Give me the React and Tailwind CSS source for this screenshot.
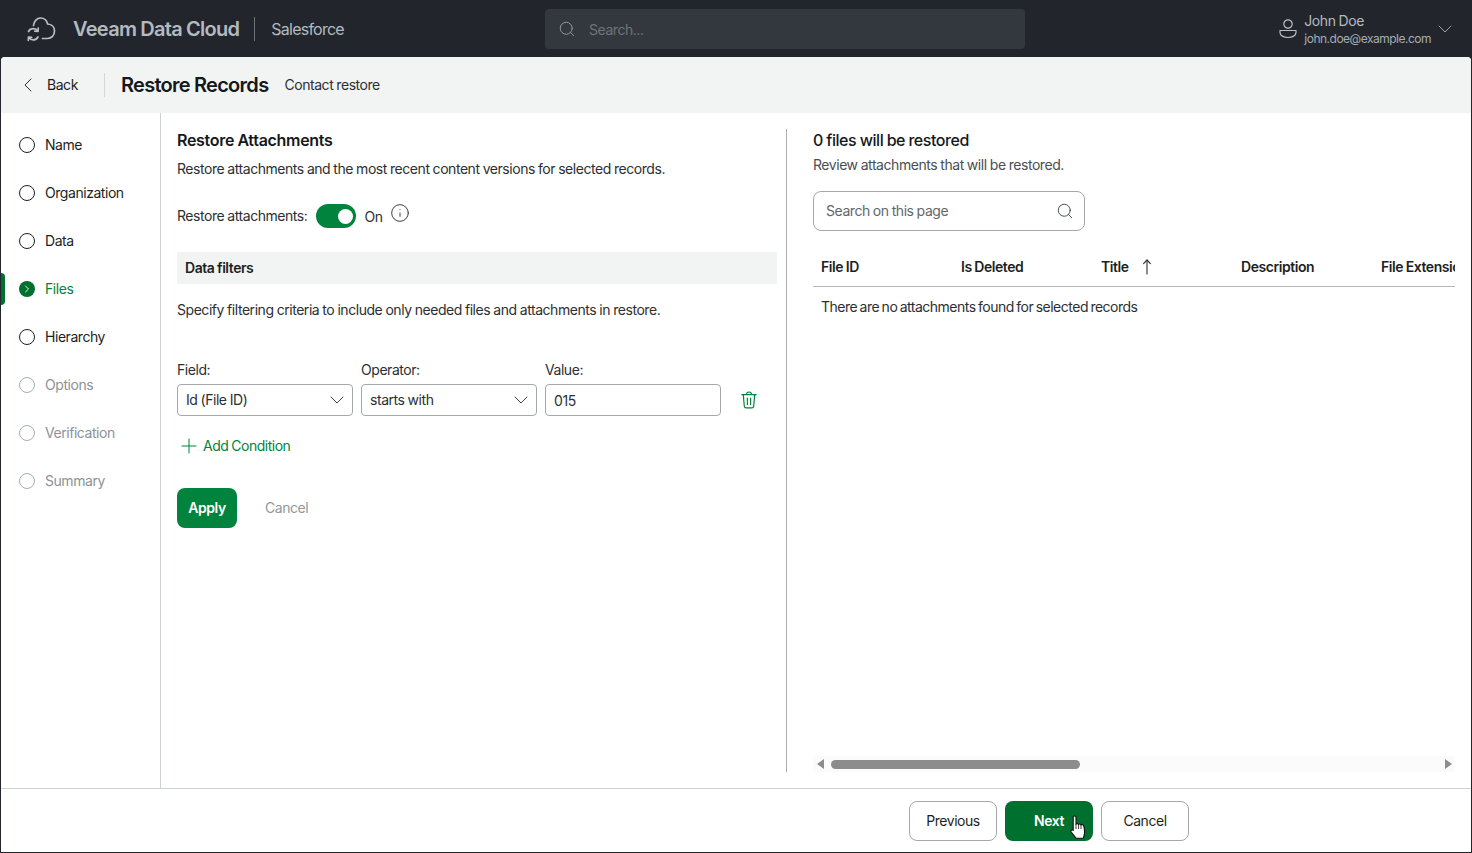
import React from "react";
import { ChevronLeft, ChevronDown, ChevronRight, Search, Plus, Info } from "lucide-react";

function Logo() {
  return (
    <svg width="30" height="26" viewBox="0 0 30 26" fill="none" stroke="#b9bec4" strokeWidth="1.7" strokeLinecap="round" strokeLinejoin="round">
      <path d="M7.5 9.5 C8 5 11 2 14.5 2 C18 2 20.8 4.4 21.6 8 C25.8 8.2 28.5 11 28.5 15 C28.5 19.4 25.6 22.5 21.5 22.5 L16.5 22.5" />
      <path d="M2.5 15.5 C3.5 13.6 5.3 12.7 7.3 12.7 C9.2 12.7 10.8 13.5 11.8 14.9" />
      <path d="M12.2 12 L12 15.4 L8.8 15.2" />
      <path d="M12 21 C11 22.9 9.2 23.9 7.2 23.9 C5.3 23.9 3.7 23 2.7 21.6" />
      <path d="M2.3 24.4 L2.5 21.1 L5.7 21.3" />
    </svg>
  );
}

function User() {
  return (
    <svg width="18" height="20" viewBox="0 0 18 20" fill="none" stroke="#b9bec4" strokeWidth="1.2">
      <circle cx="9" cy="5" r="4.2" />
      <path d="M1 11.5 H17 V13.5 C17 16.5 13.5 18.5 9 18.5 C4.5 18.5 1 16.5 1 13.5 Z" strokeLinejoin="round" />
    </svg>
  );
}

function Trash() {
  return (
    <svg width="16" height="18" viewBox="0 0 16 18" fill="none" stroke="#00843d" strokeWidth="1.2" strokeLinecap="round" strokeLinejoin="round">
      <path d="M0.8 3.6 H15.2" />
      <path d="M5.6 3.4 C5.6 1.8 6.4 1 8 1 C9.6 1 10.4 1.8 10.4 3.4" />
      <path d="M2.3 3.8 L3.3 15.2 C3.4 16.3 4 16.9 5.1 16.9 H10.9 C12 16.9 12.6 16.3 12.7 15.2 L13.7 3.8" />
      <path d="M6.4 7 V13.6" />
      <path d="M9.6 7 V13.6" />
    </svg>
  );
}

function Hand() {
  return (
    <svg width="16" height="24" viewBox="0 0 16 24" fill="#fff" stroke="#111" strokeWidth="1.1" strokeLinejoin="round">
      <path d="M3.2 14.5 V2.2 C3.2 0.6 6 0.6 6 2.2 V9.5 C6.2 8.3 8.4 8.3 8.6 9.6 C8.8 8.6 10.8 8.7 11 10.1 C11.3 9.2 13.5 9.4 13.7 11 C14.6 14 14.8 17.3 14.2 20 L13.4 23.2 H6 L1.2 17.2 C0.2 15.8 1.6 14 3.2 15.4 Z" />
      <path d="M6 9.5 V14 M8.6 9.6 V14 M11 10.1 V14" fill="none" strokeWidth="0.8" />
    </svg>
  );
}

function SortUp() {
  return (
    <svg width="10" height="16" viewBox="0 0 10 16" fill="none" stroke="#2b2f33" strokeWidth="1.1" strokeLinecap="round" strokeLinejoin="round">
      <path d="M5 1 V15" />
      <path d="M1.6 4.6 L5 1 L8.4 4.6" />
    </svg>
  );
}

function Step({ label, state }) {
  if (state === "active") {
    return (
      <div className="relative flex h-12 items-center gap-[10px] pl-[18px]">
        <div className="absolute left-0 top-2 h-8 w-1 rounded-r-sm bg-[#00702f]" />
        <span className="flex size-4 items-center justify-center rounded-full bg-[#00702f]">
          <ChevronRight size={12} color="#fff" strokeWidth={1.8} />
        </span>
        <span className="text-sm text-[#00843d]">{label}</span>
      </div>
    );
  }
  const off = state === "off";
  return (
    <div className="flex h-12 items-center gap-[10px] pl-[18px]">
      <span className={off ? "size-4 rounded-full border-[1.5px] border-[#a8adb1]" : "size-4 rounded-full border-[1.5px] border-[#1c1f22]"} />
      <span className={off ? "text-sm text-[#8d9296]" : "text-sm text-[#1c1f22]"}>{label}</span>
    </div>
  );
}

function SelectBox({ label, value }) {
  return (
    <div className="w-44">
      <div className="h-[25px] text-sm leading-[22px] text-[#2b2f33]">{label}</div>
      <div className="flex h-8 items-center justify-between rounded border border-[#a4a8ab] pl-2 pr-[3px] text-sm text-[#2b2f33]">
        <span>{value}</span>
        <ChevronDown size={24} color="#3c4043" strokeWidth={1} />
      </div>
    </div>
  );
}

function Th({ children, className = "" }) {
  return <div className={"w-[140px] shrink-0 whitespace-nowrap pl-2 text-sm font-semibold text-[#1c1f22] " + className}>{children}</div>;
}

export default function App() {
  return (
    <div className="flex h-[853px] w-[1472px] flex-col overflow-hidden bg-[#22262c] font-['Inter',sans-serif] tracking-[-0.45px] [word-spacing:-0.4px]">
      <header className="flex h-[57px] shrink-0 items-center">
        <div className="ml-[26px] flex w-[519px] items-center">
          <Logo />
          <span className="ml-[17px] text-xl font-semibold tracking-[-0.7px] text-[#b4bac0]">Veeam Data Cloud</span>
          <span className="ml-[15px] h-6 w-px bg-[#6c7278]" />
          <span className="ml-4 text-base tracking-[-0.75px] text-[#b4bac0]">Salesforce</span>
        </div>
        <div className="flex h-10 w-[480px] items-center gap-[13px] rounded bg-[#33383f] pl-[13px]">
          <Search size={18} color="#9aa0a6" strokeWidth={1.2} />
          <span className="pt-[2px] text-sm text-[#6d737a]">Search...</span>
        </div>
        <div className="ml-auto flex items-center pr-[15px]">
          <User />
          <div className="ml-[7px] flex flex-col pt-[2px]">
            <span className="text-sm leading-[18px] text-[#b4bac0]">John Doe</span>
            <span className="text-xs leading-[18px] tracking-[-0.5px] text-[#a5acb3]">john.doe@example.com</span>
          </div>
          <ChevronDown size={24} color="#9aa0a6" strokeWidth={1} className="ml-[2px]" />
        </div>
      </header>

      <main className="mx-px mb-px flex min-h-0 flex-1 flex-col overflow-hidden rounded-t-[4px] bg-white">
        <div className="flex h-14 shrink-0 items-center bg-[#f2f4f3]">
          <ChevronLeft size={24} color="#2b2f33" strokeWidth={1} className="ml-[15px]" />
          <span className="ml-[7px] text-sm text-[#1c1f22]">Back</span>
          <span className="ml-[26px] h-6 w-px bg-[#d4d7d8]" />
          <span className="ml-4 text-xl font-semibold tracking-[-0.7px] text-[#15181b]">Restore Records</span>
          <span className="ml-4 text-sm text-[#2b2f33]">Contact restore</span>
        </div>

        <div className="flex min-h-0 flex-1">
          <nav className="w-40 shrink-0 border-r border-[#cfd2d3] pt-2">
            <Step label="Name" />
            <Step label="Organization" />
            <Step label="Data" />
            <Step label="Files" state="active" />
            <Step label="Hierarchy" />
            <Step label="Options" state="off" />
            <Step label="Verification" state="off" />
            <Step label="Summary" state="off" />
          </nav>

          <section className="flex min-w-0 flex-1 pb-4 pt-4">
            <div className="w-[626px] shrink-0 border-r border-[#a9adb0] pl-4 pr-[9px]">
              <h2 className="mt-[1px] text-base font-semibold leading-[20px] tracking-[-0.3px] text-[#15181b]">Restore Attachments</h2>
              <p className="mt-[9px] text-sm leading-5 text-[#2b2f33]">Restore attachments and the most recent content versions for selected records.</p>
              <div className="mt-[25px] flex h-[24px] items-center">
                <span className="text-sm text-[#2b2f33]">Restore attachments:</span>
                <span className="ml-[9px] flex h-6 w-10 items-center justify-end rounded-full bg-[#00843d] pr-[3px]">
                  <span className="size-[15px] rounded-full bg-white" />
                </span>
                <span className="ml-2 pt-px text-sm text-[#2b2f33]">On</span>
                <Info size={20} color="#2b2f33" strokeWidth={1.1} className="mb-[6px] ml-2" />
              </div>
              <div className="mt-6 flex h-8 items-center bg-[#f2f4f3] pl-2 text-sm font-semibold text-[#1c1f22]">Data filters</div>
              <p className="mt-4 text-sm leading-5 text-[#2b2f33]">Specify filtering criteria to include only needed files and attachments in restore.</p>
              <div className="mt-[39px] flex items-end gap-2">
                <SelectBox label="Field:" value="Id (File ID)" />
                <SelectBox label="Operator:" value="starts with" />
                <div className="w-44">
                  <div className="h-[25px] text-sm leading-[22px] text-[#2b2f33]">Value:</div>
                  <div className="flex h-8 items-center rounded border border-[#a4a8ab] pl-2 pt-px text-sm text-[#2b2f33]">015</div>
                </div>
                <div className="flex h-8 items-center pl-3">
                  <Trash />
                </div>
              </div>
              <div className="mt-5 flex h-5 items-center">
                <Plus size={24} color="#00843d" strokeWidth={1} />
                <span className="ml-[2px] text-sm tracking-[-0.5px] text-[#00843d]">Add Condition</span>
              </div>
              <div className="mt-8 flex items-center">
                <button className="h-10 w-[60px] rounded-lg bg-[#00843d] text-sm font-semibold text-white">Apply</button>
                <span className="ml-7 text-sm text-[#92979b]">Cancel</span>
              </div>
            </div>

            <div className="flex min-w-0 flex-1 flex-col pl-[26px] pr-4">
              <h2 className="mt-[1px] text-base font-medium leading-[20px] text-[#15181b]">0 files will be restored</h2>
              <p className="mt-[5px] text-sm leading-5 text-[#4a4f53]">Review attachments that will be restored.</p>
              <div className="mt-4 flex h-10 w-[272px] items-center justify-between rounded-lg border border-[#a4a8ab] pl-3 pr-[10px]">
                <span className="text-sm text-[#62676b]">Search on this page</span>
                <Search size={18} color="#2b2f33" strokeWidth={1.1} />
              </div>
              <div className="mt-[14px] flex h-[42px] items-center overflow-hidden border-b border-[#b4b7b9] pt-[2px]">
                <Th>File ID</Th>
                <Th>Is Deleted</Th>
                <Th className="flex items-center gap-[13px]">Title <SortUp /></Th>
                <Th>Description</Th>
                <Th>File Extension</Th>
              </div>
              <div className="h-10 pl-2 text-sm leading-10 tracking-[-0.5px] text-[#2b2f33] [word-spacing:-1px]">There are no attachments found for selected records</div>
              <div className="mt-auto flex h-4 items-center bg-[#fbfbfb] pl-1 pr-[3px]">
                <span className="border-y-[5px] border-r-[7px] border-y-transparent border-r-[#8c8c8c]" />
                <span className="ml-[7px] h-[9px] w-[249px] rounded-full bg-[#8c8c8c]" />
                <span className="ml-auto border-y-[5px] border-l-[7px] border-y-transparent border-l-[#8c8c8c]" />
              </div>
            </div>
          </section>
        </div>

        <footer className="flex h-[64px] shrink-0 items-center gap-2 border-t border-[#cfd2d3] pl-[908px]">
          <button className="h-10 w-[88px] rounded-lg border border-[#a4a8ab] text-sm text-[#1c1f22]">Previous</button>
          <button className="relative h-10 w-[88px] rounded-lg bg-[#00702f] text-sm font-semibold text-white">
            Next
            <span className="absolute left-[65px] top-[14px]"><Hand /></span>
          </button>
          <button className="h-10 w-[88px] rounded-lg border border-[#a4a8ab] text-sm text-[#1c1f22]">Cancel</button>
        </footer>
      </main>
    </div>
  );
}
